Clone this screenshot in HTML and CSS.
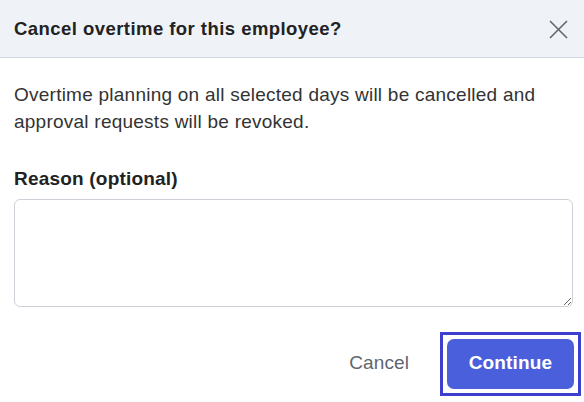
FILE: index.html
```html
<!DOCTYPE html>
<html>
<head>
<meta charset="utf-8">
<link rel="stylesheet" href="styles.css">
</head>
<body>
<div class="dialog">
  <div class="header">
    <h2 class="title">Cancel overtime for this employee?</h2>
    <button class="close" aria-label="Close">
      <svg width="19" height="19" viewBox="0 0 19 19"><path d="M1 1L18 18M18 1L1 18" stroke="#60666e" stroke-width="1.6" fill="none"/></svg>
    </button>
  </div>
  <div class="content">
    <p class="message">Overtime planning on all selected days will be cancelled and approval requests will be revoked.</p>
    <label class="label" for="reason">Reason (optional)</label>
    <textarea id="reason" class="reason"></textarea>
  </div>
  <div class="footer">
    <button class="btn-cancel">Cancel</button>
    <span class="focus-ring"><button class="btn-continue">Continue</button></span>
  </div>
</div>
</body>
</html>
```
FILE: styles.css
```css
html, body {
  margin: 0;
  padding: 0;
  background: #ffffff;
}
body {
  font-family: "Liberation Sans", Arial, sans-serif;
  color: #333333;
}
.dialog {
  width: 584px;
}
.header {
  height: 58px;
  box-sizing: border-box;
  background: #eff3f8;
  border-bottom: 1px solid #d3d9e2;
  display: flex;
  align-items: center;
  justify-content: space-between;
  padding: 0 16px 0 14px;
}
.title {
  margin: 0;
  font-size: 18.5px;
  letter-spacing: 0.45px;
  font-weight: bold;
  color: #222222;
  padding-top: 1px;
}
.close {
  border: 0;
  background: none;
  padding: 0;
  width: 19px;
  height: 19px;
  display: flex;
  margin-top: 2px;
}
.content {
  padding: 23px 11px 0 14px;
  display: flex;
  flex-direction: column;
}
.message {
  margin: 0;
  font-size: 19px;
  letter-spacing: 0.24px;
  line-height: 27px;
  color: #333333;
}
.label {
  margin-top: 33px;
  font-size: 19px;
  letter-spacing: 0.2px;
  font-weight: bold;
  color: #222222;
  line-height: 22px;
}
.reason {
  margin-top: 9px;
  height: 108px;
  box-sizing: border-box;
  border: 1px solid #cdd2d9;
  border-radius: 6px;
  resize: vertical;
  font-family: inherit;
  font-size: 16px;
}
.footer {
  display: flex;
  justify-content: flex-end;
  align-items: center;
  gap: 31px;
  padding: 25px 3px 0 0;
}
.btn-cancel {
  border: 0;
  background: none;
  font-family: inherit;
  font-size: 19px;
  letter-spacing: 0.1px;
  color: #5f6670;
  padding: 0;
  margin-top: -3px;
}
.focus-ring {
  display: flex;
  border: 3.5px solid #3d40cc;
  padding: 4px;
}
.btn-continue {
  border: 0;
  background: #4a5fdb;
  color: #ffffff;
  font-family: inherit;
  font-size: 19px;
  letter-spacing: 0.15px;
  font-weight: bold;
  width: 127px;
  height: 50px;
  border-radius: 7px;
  padding: 0 0 3px 0;
}
```
